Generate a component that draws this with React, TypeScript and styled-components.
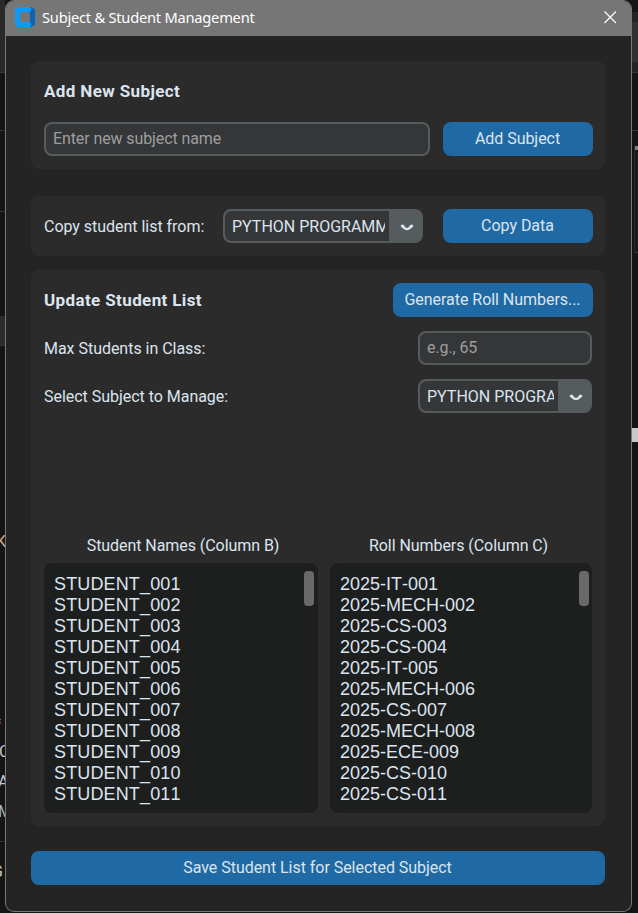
import React from "react";
import styled, { createGlobalStyle } from "styled-components";

const GlobalStyle = createGlobalStyle`
  *, *::before, *::after { box-sizing: border-box; }
  body { margin: 0; background: #161616; overflow: hidden; font-family: Roboto, "Liberation Sans", sans-serif; }
`;

const Desktop = styled.div`
  display: grid;
  grid-template-columns: 5px 627px 6px;
  width: 638px;
  height: 913px;
  overflow: hidden;
  background: #151515;
`;

const EdgeStrip = styled.div`
  display: flex;
  flex-direction: column;
  overflow: hidden;
`;

const Band = styled.div<{ $h: number; $c?: string; $line?: boolean; $inset?: boolean }>`
  flex: none;
  height: ${(p) => p.$h}px;
  margin-left: ${(p) => (p.$inset ? 2 : 0)}px;
  background: ${(p) => p.$c ?? "transparent"};
  border-left: ${(p) => (p.$inset ? "1px solid #2c2c2c" : "none")};
  border-bottom: ${(p) => (p.$line ? "1px solid #363636" : "none")};
`;

const EdgeText = styled.div<{ $c: string; $h: number; $shift?: number }>`
  flex: none;
  height: ${(p) => p.$h}px;
  line-height: ${(p) => p.$h}px;
  font-size: 16px;
  color: ${(p) => p.$c};
  text-indent: ${(p) => p.$shift ?? 0}px;
  white-space: nowrap;
`;

const Window = styled.main`
  height: 912px;
  background: #242424;
  border: 1px solid #777;
  border-top-color: #767676;
  border-radius: 9px;
  overflow: hidden;
  display: flex;
  flex-direction: column;
`;

const TitleBar = styled.header`
  height: 35px;
  flex: none;
  background: #767676;
  display: flex;
  align-items: center;
  padding: 0 14px 3px 9px;
`;

const TitleText = styled.h1`
  margin: 0 auto 0 7px;
  font: 400 14.7px/20px "Noto Sans", sans-serif;
  letter-spacing: -0.25px;
  color: #fff;
  white-space: nowrap;
`;

const Content = styled.div`
  display: flex;
  flex-direction: column;
  padding: 25px 26px 0 25px;
`;

const Card = styled.section<{ $h: number; $gap: number }>`
  height: ${(p) => p.$h}px;
  margin-bottom: ${(p) => p.$gap}px;
  padding: 13px 12px 13px 13px;
  border-radius: 8px;
  background: #2b2b2b;
`;

const Row = styled.div<{ $mb?: number; $inset?: boolean }>`
  display: flex;
  align-items: center;
  justify-content: space-between;
  height: 34px;
  margin-bottom: ${(p) => p.$mb ?? 0}px;
  padding-right: ${(p) => (p.$inset ? 1 : 0)}px;
`;

const Heading = styled.h2`
  margin: 0;
  font-size: 17px;
  line-height: 20px;
  font-weight: 700;
  letter-spacing: 0.38px;
  color: #dce4ee;
  white-space: nowrap;
`;

const Label = styled.span<{ $w?: number }>`
  width: ${(p) => (p.$w ? p.$w + "px" : "auto")};
  padding-top: 2px;
  font-size: 16px;
  line-height: 20px;
  letter-spacing: -0.03px;
  color: #dce4ee;
  white-space: nowrap;
`;

const Field = styled.input<{ $w: number }>`
  width: ${(p) => p.$w}px;
  height: 34px;
  padding: 0 7px 1px;
  border: 2px solid #565b5e;
  border-radius: 8px;
  background: #343638;
  font: 400 16px Roboto, sans-serif;
  letter-spacing: -0.1px;
  color: #dce4ee;
  outline: none;
  &::placeholder { color: #9e9e9e; opacity: 1; }
`;

const Button = styled.button<{ $w?: number }>`
  width: ${(p) => (p.$w ? p.$w + "px" : "100%")};
  height: 34px;
  flex: none;
  padding: 0 1px 1px 0;
  border: 0;
  border-radius: 8px;
  background: #1f6aa5;
  font: 400 16px Roboto, sans-serif;
  letter-spacing: -0.04px;
  color: #dce4ee;
  white-space: nowrap;
`;

const Select = styled.div<{ $w: number }>`
  display: flex;
  width: ${(p) => p.$w}px;
  height: 34px;
  border: 2px solid #565b5e;
  border-radius: 8px;
  background: #565b5e;
  overflow: hidden;
`;

const SelectValue = styled.div`
  flex: 1;
  min-width: 0;
  padding: 0 4px 0 7px;
  border-radius: 6px 0 0 6px;
  background: #343638;
`;

const SelectText = styled.div`
  overflow: hidden;
  font-size: 16px;
  line-height: 31px;
  color: #dce4ee;
  white-space: nowrap;
`;

const Arrow = styled.div`
  width: 32px;
  flex: none;
  display: flex;
  align-items: center;
  padding: 3px 0 0 11px;
`;

const Lists = styled.div`
  display: grid;
  grid-template-columns: 274px 262px;
  column-gap: 12px;
  margin-top: 122px;
`;

const Column = styled.div`
  display: flex;
  flex-direction: column;
`;

const ColumnTitle = styled.div<{ $nudge: number }>`
  height: 28px;
  line-height: 21px;
  font-size: 16px;
  letter-spacing: -0.06px;
  text-align: center;
  text-indent: ${(p) => p.$nudge}px;
  color: #dce4ee;
`;

const TextBox = styled.div<{ $bar: number }>`
  display: flex;
  justify-content: space-between;
  height: 250px;
  border-radius: 8px;
  background: #1d1e1e;
  padding: 8px ${(p) => p.$bar}px 8px 10px;
`;

const Lines = styled.div<{ $ls: number }>`
  padding-top: 3px;
  font: 400 18px/21px "Liberation Sans", Arial, sans-serif;
  font-kerning: none;
  letter-spacing: ${(p) => p.$ls}px;
  color: #dce4ee;
  white-space: pre;
`;

const Thumb = styled.div`
  width: 10px;
  height: 35px;
  border-radius: 4px;
  background: #696969;
`;

const names = Array.from({ length: 11 }, (_, i) => `STUDENT_${String(i + 1).padStart(3, "0")}`);
const branches = ["IT", "MECH", "CS", "CS", "IT", "MECH", "CS", "MECH", "ECE", "CS", "CS"];
const rolls = branches.map((b, i) => `2025-${b}-${String(i + 1).padStart(3, "0")}`);

const Logo = () => (
  <svg width="20" height="20" viewBox="0 0 20 20">
    <path d="M14 0h2.500L20 2.500v15L16.500 20H14z" fill="#0864b4" />
    <path
      fillRule="evenodd"
      d="M4 0h11l1.500 2-1 2.500L14.500 5.500H7A1.500 1.500 0 0 0 5.500 7v6A1.500 1.500 0 0 0 7 14.500h7.500l1 1 1 2.500-1.500 2H4a4 4 0 0 1-4-4V4a4 4 0 0 1 4-4z"
      fill="#0a9bff"
    />
    <path d="M5 6.500A1.500 1.500 0 0 1 6.500 5h7A1.500 1.500 0 0 1 15 6.500v7a1.500 1.500 0 0 1-1.500 1.500h-7A1.500 1.500 0 0 1 5 13.500z" fill="#767676" />
  </svg>
);

const CloseIcon = () => (
  <svg width="13" height="13" viewBox="0 0 13 13">
    <path d="M.5.5l11.500 11.500M12 .5L.5 12" stroke="#fff" strokeWidth="1.200" fill="none" />
  </svg>
);

const DropIcon = () => (
  <svg width="14" height="7" viewBox="0 0 14 7">
    <path
      d="M2 2L5.200 4.500Q7 5.700 8.800 4.500L12 2"
      stroke="#dce4ee"
      strokeWidth="2.500"
      strokeLinecap="round"
      strokeLinejoin="round"
      fill="none"
    />
    <path d="M2 1.900h1.200M10.800 1.900H12" stroke="#dce4ee" strokeWidth="2.200" strokeLinecap="round" />
  </svg>
);

const ComboBox = ({ w }: { w: number }) => (
  <Select $w={w}>
    <SelectValue>
      <SelectText>PYTHON PROGRAMMING</SelectText>
    </SelectValue>
    <Arrow>
      <DropIcon />
    </Arrow>
  </Select>
);

type ListProps = { title: string; lines: string[]; bar: number; ls: number; nudge: number };

const ScrollList = ({ title, lines, bar, ls, nudge }: ListProps) => (
  <Column>
    <ColumnTitle $nudge={nudge}>{title}</ColumnTitle>
    <TextBox $bar={bar}>
      <Lines $ls={ls}>{lines.join("\n")}</Lines>
      <Thumb />
    </TextBox>
  </Column>
);

export default function App() {
  return (
    <>
      <GlobalStyle />
      <Desktop>
        <EdgeStrip>
          <Band $h={73} $c="#292929" $line />
          <Band $h={58} $line />
          <Band $h={81} $line />
          <Band $h={104} />
          <Band $h={30} $c="#2b2b2b" $line />
          <Band $h={186} />
          <EdgeText $c="#d6b08a" $h={20} $shift={-4}>K</EdgeText>
          <Band $h={160} />
          <EdgeText $c="#c46a2c" $h={20} $shift={-7}>=</EdgeText>
          <Band $h={10} />
          <EdgeText $c="#c8c8c8" $h={20} $shift={-1}>C</EdgeText>
          <Band $h={10} />
          <EdgeText $c="#c8c8c8" $h={20} $shift={-2}>A</EdgeText>
          <Band $h={10} />
          <EdgeText $c="#9fb6cc" $h={20} $shift={-2}>M</EdgeText>
          <Band $h={20} $line />
          <Band $h={20} />
          <EdgeText $c="#c8c8c8" $h={20} $shift={-8}>G</EdgeText>
        </EdgeStrip>
        <Window>
          <TitleBar>
            <Logo />
            <TitleText>Subject &amp; Student Management</TitleText>
            <CloseIcon />
          </TitleBar>
          <Content>
            <Card $h={108} $gap={27}>
              <Row $mb={14}>
                <Heading>Add New Subject</Heading>
              </Row>
              <Row>
                <Field $w={386} placeholder="Enter new subject name" />
                <Button $w={150}>Add Subject</Button>
              </Row>
            </Card>
            <Card $h={60} $gap={14}>
              <Row>
                <Label $w={159}>Copy student list from:</Label>
                <ComboBox w={200} />
                <Button $w={150}>Copy Data</Button>
              </Row>
            </Card>
            <Card $h={556} $gap={25}>
              <Row $mb={14}>
                <Heading>Update Student List</Heading>
                <Button $w={200}>Generate Roll Numbers...</Button>
              </Row>
              <Row $mb={14} $inset>
                <Label>Max Students in Class:</Label>
                <Field $w={174} placeholder="e.g., 65" />
              </Row>
              <Row $inset>
                <Label>Select Subject to Manage:</Label>
                <ComboBox w={174} />
              </Row>
              <Lists>
                <ScrollList title="Student Names (Column B)" lines={names} bar={4} ls={0.14} nudge={4} />
                <ScrollList title="Roll Numbers (Column C)" lines={rolls} bar={3} ls={0} nudge={-5} />
              </Lists>
            </Card>
            <Button>Save Student List for Selected Subject</Button>
          </Content>
        </Window>
        <EdgeStrip>
          <Band $h={12} $c="#161616" />
          <Band $h={10} $c="#242424" />
          <Band $h={40} $c="#303030" />
          <Band $h={11} $c="#242424" $line />
          <Band $h={58} $line />
          <Band $h={15} />
          <Band $h={4} $c="#808080" $inset />
          <Band $h={103} $c="#191919" $line $inset />
          <Band $h={175} />
          <Band $h={14} $c="#c8c8c8" />
        </EdgeStrip>
      </Desktop>
    </>
  );
}
